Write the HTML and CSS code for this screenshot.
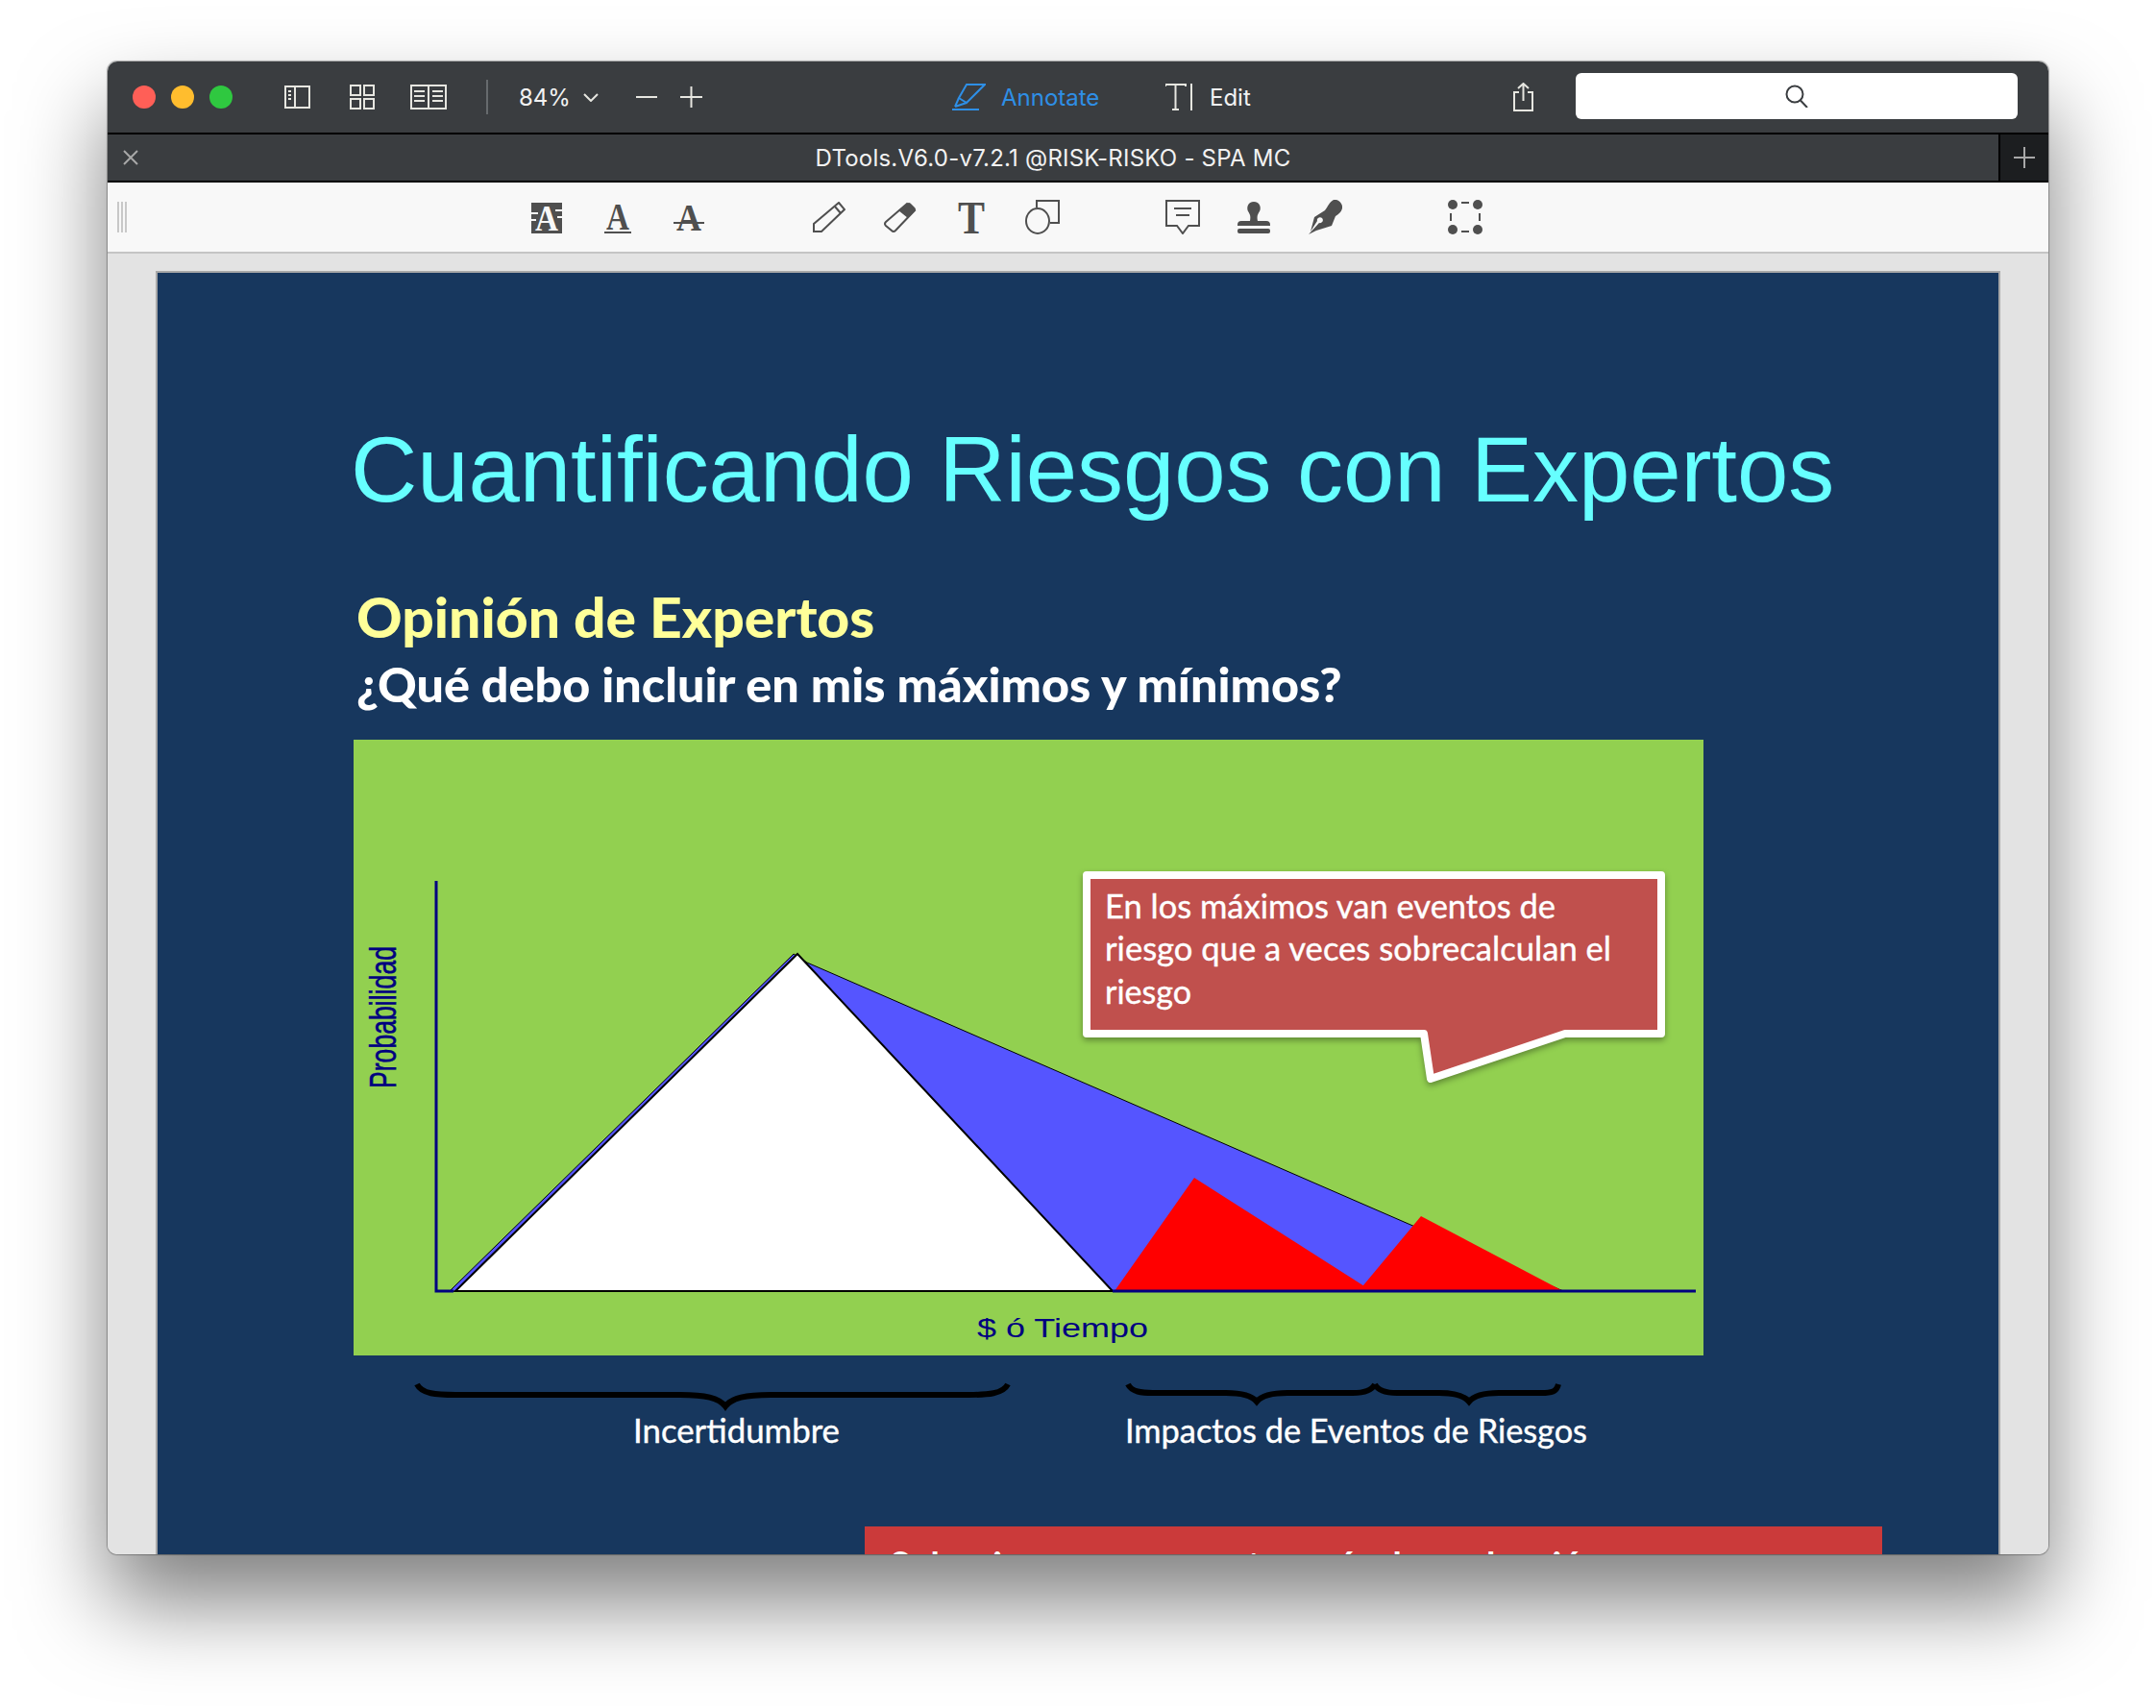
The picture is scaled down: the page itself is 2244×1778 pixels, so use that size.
FILE: index.html
```html
<!DOCTYPE html>
<html lang="en">
<head>
    <meta charset="UTF-8">
    <title>DTools.V6.0-v7.2.1 @RISK-RISKO - SPA MC</title>
    <link rel="stylesheet" href="styles.css">
</head>
<body>
    <div class="window">
        <div class="titlebar">
            <div class="lights">
                <span class="light red"></span>
                <span class="light yellow"></span>
                <span class="light green"></span>
            </div>
            <svg class="line-icon view-sidebar" width="27" height="24" viewBox="0 0 27 24">
                <rect x="1" y="1" width="25" height="22"/><path d="M11 1V23"/><path d="M4 6H7M4 10H7M4 14H7"/>
            </svg>
            <svg class="line-icon view-grid" width="26" height="26" viewBox="0 0 26 26">
                <rect x="1" y="1" width="10" height="10"/><rect x="15" y="1" width="10" height="10"/>
                <rect x="1" y="15" width="10" height="10"/><rect x="15" y="15" width="10" height="10"/>
            </svg>
            <svg class="line-icon view-book" width="38" height="26" viewBox="0 0 38 26">
                <rect x="1" y="1" width="36" height="24"/><path d="M19 1V25"/>
                <path d="M4 7H15M4 12H15M4 17H15M23 7H34M23 12H34M23 17H34"/>
            </svg>
            <span class="sep"></span>
            <span class="zoom-value">84%</span>
            <svg class="line-icon chevron" width="16" height="9" viewBox="0 0 16 9"><path d="M1 1L8 8L15 1"/></svg>
            <svg class="line-icon zoom-out" width="22" height="22" viewBox="0 0 22 22"><path d="M0 11H22"/></svg>
            <svg class="line-icon zoom-in" width="23" height="22" viewBox="0 0 23 22"><path d="M0 11H23M11.5 0V22"/></svg>

            <svg class="annotate-icon" width="35" height="28" viewBox="0 0 35 28">
                <path d="M15 1H34L15 20L7 15Z"/><path d="M7 15L3 24M15 20L3 24"/><path d="M0 27H28"/>
            </svg>
            <span class="mode annotate">Annotate</span>
            <svg class="line-icon edit-icon" width="28" height="28" viewBox="0 0 28 28">
                <path d="M0 3V1H21V3M10.500 1V27M7 27H14"/><path d="M27 0V28"/>
            </svg>
            <span class="mode edit">Edit</span>
            <svg class="line-icon share-icon" width="21" height="30" viewBox="0 0 21 30">
                <path d="M6 10H1V29H20V10H15"/><path d="M10.500 19V1M5 6L10.500 1L16 6"/>
            </svg>
            <div class="search">
                <svg class="search-icon" width="24" height="24" viewBox="0 0 24 24">
                    <circle cx="10" cy="10" r="8.500"/><path d="M15.500 16L23 24"/>
                </svg>
            </div>
        </div>

        <div class="tabbar">
            <div class="tab">
                <svg class="tab-close" width="16" height="16" viewBox="0 0 16 16"><path d="M1 1L15 15M15 1L1 15"/></svg>
                <span class="tab-title">DTools.V6.0-v7.2.1 @RISK-RISKO - SPA MC</span>
            </div>
            <div class="tab-add">
                <svg width="22" height="22" viewBox="0 0 22 22"><path d="M0 11H22M11 0V22"/></svg>
            </div>
        </div>

        <div class="toolbar">
            <div class="handle"><span></span><span></span><span></span></div>
            <div class="tools">
                <svg width="36" height="52" viewBox="0 0 36 52">
                    <rect class="fill" x="2" y="11" width="32" height="32"/>
                    <path class="cut" d="M2 22H9M2 29H7M27 19H34M29 26H34"/>
                    <text class="glyph light-glyph" x="18" y="40" font-size="37" textLength="24" lengthAdjust="spacingAndGlyphs">A</text>
                </svg>
                <svg width="36" height="52" viewBox="0 0 36 52">
                    <text class="glyph" x="18" y="39" font-size="39" textLength="24" lengthAdjust="spacingAndGlyphs">A</text>
                    <rect class="fill" x="4" y="41" width="28" height="2"/>
                </svg>
                <svg width="36" height="52" viewBox="0 0 36 52">
                    <text class="glyph" x="18" y="40" font-size="39" textLength="26" lengthAdjust="spacingAndGlyphs">A</text>
                    <rect class="fill" x="2" y="31" width="32" height="2"/>
                </svg>
            </div>
            <div class="tools">
                <svg width="34" height="32" viewBox="0 0 34 32">
                    <path class="stroke" d="M27 1L33 8L9 31H1V23Z"/><path class="stroke" d="M23 5L29 12"/>
                </svg>
                <svg width="34" height="32" viewBox="0 0 34 32">
                    <path class="stroke" d="M24 2L32 9L12 30Q10 32 8 30L2 25Q0 23 2 21Z"/>
                    <path class="fill" d="M24 2Q26 0 28 2L32 6Q34 8 32 10L25 17L15 9Z"/>
                </svg>
                <svg width="36" height="60" viewBox="0 0 36 60">
                    <text class="glyph" x="18" y="47" font-size="48" textLength="28" lengthAdjust="spacingAndGlyphs">T</text>
                </svg>
                <svg width="36" height="36" viewBox="0 0 36 36">
                    <path class="stroke" d="M12 8V1H35V24H26"/><ellipse class="stroke" cx="13" cy="22" rx="12" ry="13"/>
                </svg>
            </div>
            <div class="tools">
                <svg width="36" height="36" viewBox="0 0 36 36">
                    <path class="stroke" d="M1 1H35V27H24L18 35L12 27H1Z"/><path class="stroke" d="M9 9H27M11 16H25"/>
                </svg>
                <svg width="34" height="33" viewBox="0 0 34 33">
                    <path class="fill" d="M17 0C23 0 25 6 23 10C21 13 20 15 21 20H30Q34 20 34 24V25H0V24Q0 20 4 20H13C14 15 13 13 11 10C9 6 11 0 17 0Z"/>
                    <rect class="fill" x="0" y="28" width="34" height="5" rx="2"/>
                </svg>
                <svg width="36" height="36" viewBox="0 0 36 36">
                    <path class="fill" d="M27 0C32 -1 37 4 36 9C35 13 32 15 29 17L25 27L9 32L1 36L12 24A3 3 0 1 0 10 22L3 33L7 18L18 11C21 7 23 2 27 0Z"/>
                </svg>
            </div>
            <div class="tools">
                <svg width="36" height="36" viewBox="0 0 36 36">
                    <ellipse class="fill" cx="5" cy="5" rx="5" ry="5"/><ellipse class="fill" cx="31" cy="5" rx="5" ry="5"/>
                    <ellipse class="fill" cx="5" cy="31" rx="5" ry="5"/><ellipse class="fill" cx="31" cy="31" rx="5" ry="5"/>
                    <path class="stroke" d="M14 3H22M14 33H22M3 14V22M33 14V22"/>
                </svg>
            </div>
        </div>

        <div class="viewer">
            <div class="slide">
                <h1 class="slide-title">Cuantificando Riesgos con Expertos</h1>
                <h2 class="slide-head">Opinión de Expertos</h2>
                <h3 class="slide-sub">¿Qué debo incluir en mis máximos y mínimos?</h3>

                <svg class="chart" width="1405" height="641" viewBox="0 0 1405 641">
                    <polygon class="area-blue" points="100,574 458,223 472,232 1259,574"/>
                    <polygon class="area-white" points="106,574 462,223 790,574"/>
                    <polygon class="area-red" points="792,574 875,456 1060,574"/>
                    <polygon class="area-red" points="1046,574 1111,496 1259,574"/>
                    <path class="axis" d="M86 147V574H104M790 574H1397"/>
                    <text class="axis-label prob" transform="translate(44 363) rotate(-90)" font-size="38" textLength="148" lengthAdjust="spacingAndGlyphs">Probabilidad</text>
                    <text class="axis-label" x="649" y="622" font-size="27" textLength="178" lengthAdjust="spacingAndGlyphs">$ ó Tiempo</text>
                    <polygon class="callout" points="763,141 1361,141 1361,306 1261,306 1121,353 1114,306 763,306"/>
                    <text class="callout-text" x="782" y="186" textLength="469" lengthAdjust="spacingAndGlyphs">En los máximos van eventos de</text>
                    <text class="callout-text" x="782" y="230" textLength="527" lengthAdjust="spacingAndGlyphs">riesgo que a veces sobrecalculan el</text>
                    <text class="callout-text" x="782" y="275" textLength="90" lengthAdjust="spacingAndGlyphs">riesgo</text>
                </svg>

                <svg class="braces" width="1405" height="178" viewBox="0 0 1405 178">
                    <path class="brace" d="M66 30C71 40 86 41 106 41H340C366 41 380 44 387 53C394 44 408 41 434 41H640C660 41 676 40 681 30"/>
                    <path class="brace" d="M806 30C810 38 820 39 832 39H908C925 39 935 42 940 48C945 42 955 39 972 39H1040C1052 39 1060 36 1063 30"/>
                    <path class="brace" d="M1063 30C1066 36 1074 39 1086 39H1130C1146 39 1156 42 1161 48C1166 42 1176 39 1192 39H1236C1247 39 1252 38 1254 30"/>
                    <text class="brace-label" x="291" y="91" textLength="215" lengthAdjust="spacingAndGlyphs">Incertidumbre</text>
                    <text class="brace-label" x="803" y="91" textLength="481" lengthAdjust="spacingAndGlyphs">Impactos de Eventos de Riesgos</text>
                </svg>

                <div class="note">Sobre incorporar eventos más de evaluación</div>
            </div>
        </div>
    </div>
</body>
</html>
```

FILE: styles.css
```css
html, body {
    margin: 0;
    height: 1778px;
    overflow: hidden;
    background: #fff;
}
svg {
    display: block;
    flex: none;
}
.window {
    width: 2020px;
    height: 1554px;
    margin: 64px 0 0 112px;
    border-radius: 10px;
    overflow: hidden;
    display: flex;
    flex-direction: column;
    font-family: Inter, sans-serif;
    box-shadow: 0 0 1px 1px rgba(0, 0, 0, .3), 0 50px 90px rgba(0, 0, 0, .5);
}

/* title bar */
.titlebar {
    height: 74px;
    flex: none;
    display: flex;
    align-items: center;
    padding-left: 26px;
    background: #3a3d40;
    color: #f2f2f2;
    font-size: 24px;
    box-sizing: border-box;
}
.lights {
    display: flex;
    gap: 16px;
}
.light {
    width: 24px;
    height: 24px;
    border-radius: 50%;
}
.red { background: #ff5f57; }
.yellow { background: #ffbd2e; }
.green { background: #2fc840; }
.line-icon {
    fill: none;
    stroke: #e6e6e0;
    stroke-width: 2;
}
.view-sidebar { margin-left: 54px; }
.view-grid { margin-left: 41px; }
.view-book { margin-left: 37px; }
.sep {
    width: 2px;
    height: 36px;
    margin-left: 41px;
    background: #666a6d;
}
.zoom-value { margin-left: 32px; width: 51px; }
.chevron { margin-left: 16px; }
.zoom-out { margin-left: 39px; }
.zoom-in { margin-left: 24px; }
.annotate-icon {
    margin-left: 260px;
    fill: none;
    stroke: #2e8fe6;
    stroke-width: 2;
}
.mode { white-space: nowrap; }
.annotate { margin-left: 16px; width: 101px; color: #2e8fe6; }
.edit-icon { margin-left: 70px; }
.edit { margin-left: 18px; width: 43px; }
.share-icon { margin-left: 273px; }
.search {
    width: 460px;
    height: 48px;
    margin: 0 0 2px 44px;
    border-radius: 6px;
    background: #fff;
    display: flex;
    align-items: center;
    justify-content: center;
}
.search-icon {
    fill: none;
    stroke: #3a3d40;
    stroke-width: 2;
}

/* tab bar */
.tabbar {
    height: 52px;
    flex: none;
    display: flex;
    box-sizing: border-box;
    border-top: 2px solid #000;
    border-bottom: 2px solid #000;
    background: #3a3d40;
}
.tab {
    flex: 1;
    display: grid;
    grid-template-columns: 1fr auto 1fr;
    align-items: center;
}
.tab-close {
    margin-left: 16px;
    fill: none;
    stroke: #a8a8a8;
    stroke-width: 2;
}
.tab-title {
    grid-column: 2;
    color: #f2f2f2;
    font-size: 24px;
    letter-spacing: .22px;
    white-space: nowrap;
}
.tab-add {
    width: 52px;
    box-sizing: border-box;
    border-left: 2px solid #000;
    background: #1c1e20;
    display: flex;
    align-items: center;
    justify-content: center;
    fill: none;
    stroke: #a8a8a8;
    stroke-width: 2;
}

/* annotation toolbar */
.toolbar {
    height: 74px;
    flex: none;
    display: flex;
    align-items: center;
    box-sizing: border-box;
    border-bottom: 2px solid #c4c4c4;
    background: #f8f8f8;
}
.handle {
    display: flex;
    gap: 2px;
    margin-left: 10px;
    margin-right: 400px;
    width: 10px;
}
.handle span {
    width: 2px;
    height: 32px;
    background: #c8c8c8;
}
.tools {
    display: grid;
    grid-auto-flow: column;
    grid-auto-columns: 74px;
    justify-items: center;
    align-items: center;
    margin-right: 72px;
}
.fill { fill: #4f4f4f; }
.stroke {
    fill: none;
    stroke: #4f4f4f;
    stroke-width: 2;
}
.cut {
    fill: none;
    stroke: #f8f8f8;
    stroke-width: 2;
}
.glyph {
    fill: #4f4f4f;
    font-family: "Liberation Serif", serif;
    font-weight: bold;
    text-anchor: middle;
}
.light-glyph { fill: #f8f8f8; }

/* document area */
.viewer {
    flex: 1;
    min-height: 0;
    overflow: hidden;
    padding: 18px 50px 0;
    background: #e3e3e3;
}
.slide {
    height: 1500px;
    box-sizing: border-box;
    border: 2px solid #a8a8a8;
    padding: 150px 0 0 204px;
    background: #17375e;
}
.slide-title {
    margin: 0 0 0 -3px;
    color: #66ffff;
    font-family: "Liberation Sans", sans-serif;
    font-size: 96px;
    font-weight: normal;
    letter-spacing: -.1px;
    line-height: 110px;
    white-space: nowrap;
}
.slide-head,
.slide-sub {
    width: max-content;
    margin: 0 0 0 3px;
    font-family: Lato, sans-serif;
    font-weight: 900;
    white-space: nowrap;
    transform-origin: left;
}
.slide-head {
    margin-top: 63px;
    color: #ffff99;
    font-size: 58px;
    line-height: 70px;
    transform: scaleX(1.014);
}
.slide-sub {
    margin-top: 8px;
    color: #fff;
    font-size: 50px;
    line-height: 54px;
    transform: scaleX(1.006);
}
.chart {
    margin-top: 31px;
    background: #92d050;
}
.area-blue {
    fill: #5555ff;
    stroke: #000;
    stroke-width: 1;
}
.area-white {
    fill: #fff;
    stroke: #000;
    stroke-width: 2;
}
.area-red { fill: #f00; }
.axis {
    fill: none;
    stroke: #000080;
    stroke-width: 3;
}
.axis-label {
    fill: #000080;
    font-family: "Liberation Sans", sans-serif;
}
.prob {
    stroke: #000080;
    stroke-width: .5;
}
.callout {
    fill: #c0504d;
    stroke: #fff;
    stroke-width: 8;
    stroke-linejoin: round;
    filter: drop-shadow(0 3px 3px rgba(0, 0, 0, .35));
}
.callout-text,
.brace-label {
    fill: #fff;
    stroke: #fff;
    stroke-width: .4;
    font-family: Lato, sans-serif;
    font-size: 35px;
}
.brace {
    fill: none;
    stroke: #000;
    stroke-width: 6;
}
.note {
    width: 1059px;
    height: 200px;
    box-sizing: border-box;
    margin-left: 532px;
    padding: 16px 0 0 26px;
    background: #cb3a3a;
    color: #fff;
    font-family: Lato, sans-serif;
    font-size: 38px;
    font-weight: bold;
}
```
